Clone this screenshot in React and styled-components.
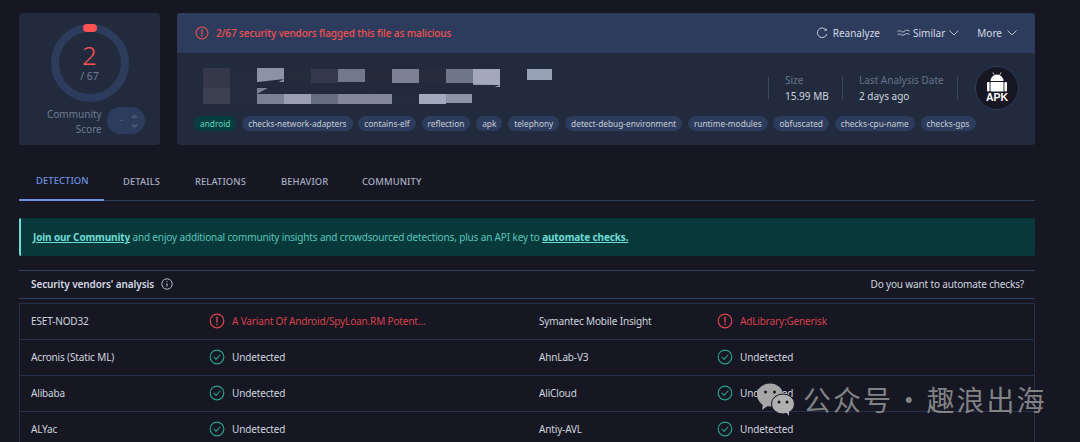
import React from "react";
import styled, { createGlobalStyle } from "styled-components";

const GlobalStyle = createGlobalStyle`
  html, body { margin: 0; padding: 0; background: #161723; }
  body { font-family: "Noto Sans", "Noto Sans CJK SC", sans-serif; }
`;

const Page = styled.div`
  position: relative;
  width: 1080px;
  height: 442px;
  box-sizing: border-box;
  padding: 13px 45px 0 19px;
  overflow: hidden;
  background: #161723;
  color: #d4d9e3;
`;

const Top = styled.div`
  display: flex;
  gap: 17px;
  height: 132px;
`;

const ScoreCard = styled.div`
  width: 141px;
  flex: none;
  box-sizing: border-box;
  padding-top: 10px;
  background: #212b3d;
  border-radius: 3px;
  display: flex;
  flex-direction: column;
  align-items: center;
`;

const Donut = styled.div`
  position: relative;
  width: 80px;
  height: 80px;
`;

const DonutText = styled.div`
  position: absolute;
  inset: 0;
  display: flex;
  flex-direction: column;
  align-items: center;
  padding-top: 19px;
  box-sizing: border-box;
`;

const ScoreValue = styled.div`
  font-size: 26px;
  line-height: 26px;
  font-weight: 300;
  color: #ff5252;
`;

const ScoreTotal = styled.div`
  font-size: 10.5px;
  line-height: 14px;
  margin-top: 1px;
  color: #6e7b93;
`;

const CommunityRow = styled.div`
  display: flex;
  align-items: center;
  gap: 5px;
  margin-top: 2px;
  align-self: flex-start;
  margin-left: 28px;
`;

const CommunityLabel = styled.div`
  font-size: 10px;
  line-height: 14.5px;
  padding-top: 2px;
  text-align: right;
  color: #6e7b93;
`;

const VotePill = styled.div`
  width: 38px;
  height: 27px;
  border-radius: 14px;
  background: #2d3c5c;
  display: flex;
  align-items: center;
  justify-content: space-between;
  padding: 0 4px 0 14px;
  box-sizing: border-box;
`;

const VoteDot = styled.span`
  width: 1.5px;
  height: 1.5px;
  background: #6e7b93;
`;

const MainCard = styled.div`
  flex: 1;
  background: #212b3d;
  border-radius: 3px;
  overflow: hidden;
  display: flex;
  flex-direction: column;
`;

const AlertBar = styled.div`
  height: 40px;
  flex: none;
  background: #2d3c5c;
  display: flex;
  align-items: center;
  padding: 0 17px 0 18px;
`;

const AlertText = styled.div`
  display: flex;
  align-items: center;
  gap: 7px;
  font-size: 10px;
  font-weight: 500;
  letter-spacing: -0.1px;
  color: #f25050;
  flex: 1;
`;

const Actions = styled.div`
  display: flex;
  align-items: center;
  gap: 17px;
`;

const Action = styled.div`
  display: flex;
  align-items: center;
  gap: ${(p) => p.$gap}px;
  font-size: 10px;
  color: #d4d9e3;
`;

const FileRow = styled.div`
  flex: none;
  height: 63px;
  display: flex;
  align-items: center;
  padding: 7px 16px 0 8px;
  box-sizing: border-box;
`;

const Mosaic = styled.svg`
  width: 400px;
  height: 50px;
  flex: none;
  align-self: flex-start;
  margin-left: -5px;
`;

const Stats = styled.div`
  margin-left: auto;
  display: flex;
  align-items: center;
`;

const Stat = styled.div`
  width: ${(p) => p.$w}px;
  height: 22px;
  box-sizing: border-box;
  border-left: 1px solid #3a475f;
  padding-left: 16px;
  display: flex;
  flex-direction: column;
  justify-content: center;
`;

const StatLabel = styled.div`
  font-size: 10px;
  line-height: 16px;
  color: #66738b;
`;

const StatValue = styled.div`
  font-size: 10px;
  line-height: 16px;
  color: #cfd5df;
`;

const Divider = styled.div`
  width: 1px;
  height: 22px;
  background: #3a475f;
  margin-right: 17px;
`;

const ApkBadge = styled.svg`
  width: 44px;
  height: 44px;
  flex: none;
`;

const Tags = styled.div`
  display: flex;
  gap: 5.8px;
  padding-left: 17px;
`;

const Tag = styled.div`
  height: 15px;
  line-height: 15px;
  padding: 0 6px;
  font-size: 8.3px;
  border-radius: 8px;
  background: ${(p) => (p.$green ? "#063f3e" : "#2d3c5c")};
  color: ${(p) => (p.$green ? "#5fcfc0" : "#c6ccd8")};
`;

const TabBar = styled.div`
  display: flex;
  height: 41px;
  box-sizing: border-box;
  margin-top: 15px;
  border-bottom: 1px solid #2f3e60;
`;

const Tab = styled.div`
  width: ${(p) => p.$w}px;
  flex: none;
  box-sizing: border-box;
  height: 41px;
  display: flex;
  align-items: center;
  padding-left: ${(p) => p.$pl}px;
  padding-top: 2px;
  font-size: 9.4px;
  font-weight: 500;
  letter-spacing: 0.1px;
  color: ${(p) => (p.$active ? "#6c93e0" : "#a6afc2")};
  border-bottom: ${(p) => (p.$active ? "2px solid #6c93e0" : "none")};
`;

const Banner = styled.div`
  height: 38px;
  line-height: 38px;
  margin-top: 17px;
  box-sizing: border-box;
  background: #07393b;
  border-left: 2px solid #6fdcd4;
  border-radius: 2px;
  padding-left: 12px;
  font-size: 10px;
  letter-spacing: -0.15px;
  color: #5cc4bb;
  white-space: pre;
`;

const BannerLink = styled.span`
  font-weight: 700;
  color: #6fdcd4;
  text-decoration: underline;
`;

const SectionHead = styled.div`
  height: 29px;
  margin-top: 14px;
  box-sizing: border-box;
  border-top: 1px solid #2f3e60;
  border-bottom: 1px solid #2f3e60;
  display: flex;
  align-items: center;
  padding: 0 11px 1px 12px;
`;

const SectionTitle = styled.div`
  display: flex;
  align-items: center;
  gap: 7px;
  font-size: 10px;
  font-weight: 600;
  letter-spacing: -0.1px;
  color: #d4d9e3;
  flex: 1;
`;

const SectionLink = styled.div`
  font-size: 10px;
  letter-spacing: -0.15px;
  color: #cfd5df;
`;

const VendorTable = styled.div`
  margin-top: 4px;
  border: 1px solid #25304a;
  border-bottom: none;
`;

const Row = styled.div`
  height: 36px;
  box-sizing: border-box;
  border-bottom: 1px solid #25304a;
  display: grid;
  grid-template-columns: 178px 330px 178px 1fr;
  align-items: center;
  padding: 0 0 2px 11px;
  font-size: 10px;
  letter-spacing: -0.15px;
`;

const Vendor = styled.div`
  color: #cfd5df;
`;

const Verdict = styled.div`
  display: flex;
  align-items: center;
  gap: 7px;
  color: ${(p) => (p.$bad ? "#d9414a" : "#cfd5df")};
`;

const Watermark = styled.div`
  position: absolute;
  left: 755px;
  top: 382px;
  display: flex;
  align-items: center;
  gap: 8px;
  font-family: "Noto Sans CJK SC", sans-serif;
  font-size: 28px;
  line-height: 34px;
  letter-spacing: 2px;
  word-spacing: -6.5px;
  color: rgba(160, 160, 160, 0.78);
  white-space: nowrap;
`;

const AlertIcon = ({ color = "#f25050", size = 16 }) => (
  <svg width={size} height={size} viewBox="0 0 16 16" fill="none" style={{ flex: "none" }}>
    <circle cx="8" cy="8" r="6.8" stroke={color} strokeWidth="1.2" />
    <path d="M8 4.2v5" stroke={color} strokeWidth="1.4" strokeLinecap="round" />
    <circle cx="8" cy="11.5" r="0.85" fill={color} />
  </svg>
);

const CheckIcon = () => (
  <svg width="16" height="16" viewBox="0 0 16 16" fill="none" style={{ flex: "none" }}>
    <circle cx="8" cy="8" r="6.8" stroke="#26a08c" strokeWidth="1.2" />
    <path d="M5 8.2l2.1 2.1L11 6" stroke="#26a08c" strokeWidth="1.1" strokeLinecap="round" strokeLinejoin="round" />
  </svg>
);

const Chevron = () => (
  <svg width="12" height="8" viewBox="0 0 12 8" fill="none">
    <path d="M1.5 1.5L6 6l4.5-4.5" stroke="#c6ccd8" strokeWidth="0.9" />
  </svg>
);

const mosaicCells = [
  [23, 8, 27, 35, "#343848"], [50, 8, 27, 35, "#232b3c"], [77, 8, 27, 14, "#8d93a6"], [104, 8, 27, 10, "#262b3c"],
  [131, 9, 27, 14, "#343a4b"], [158, 9, 27, 13, "#72798b"], [185, 9, 27, 14, "#252a3b"], [212, 9, 27, 14, "#7c8293"],
  [239, 9, 27, 14, "#272c3d"], [266, 9, 27, 14, "#70778a"], [293, 9, 27, 18, "#a3a8bc"], [320, 9, 27, 14, "#232a3b"],
  [347, 9, 25, 11, "#98a2b6"],
  [23, 28, 27, 16, "#3c4152"], [50, 30, 27, 14, "#232b3c"], [77, 28, 27, 16, "#7a8193"], [104, 34, 27, 10, "#9a9fb3"],
  [131, 34, 27, 10, "#686e81"], [158, 34, 54, 10, "#82889a"], [212, 34, 27, 10, "#232b3c"], [239, 34, 27, 10, "#a0a9bd"],
  [266, 34, 26, 9, "#8d94a8"],
];

const tags = [
  "android", "checks-network-adapters", "contains-elf", "reflection", "apk", "telephony",
  "detect-debug-environment", "runtime-modules", "obfuscated", "checks-cpu-name", "checks-gps",
];

const rows = [
  ["ESET-NOD32", "A Variant Of Android/SpyLoan.RM Potent…", true, "Symantec Mobile Insight", "AdLibrary:Generisk", true],
  ["Acronis (Static ML)", "Undetected", false, "AhnLab-V3", "Undetected", false],
  ["Alibaba", "Undetected", false, "AliCloud", "Undetected", false],
  ["ALYac", "Undetected", false, "Antiy-AVL", "Undetected", false],
];

const tabs = [
  ["DETECTION", 85, 17, true],
  ["DETAILS", 75, 19],
  ["RELATIONS", 86, 16],
  ["BEHAVIOR", 81, 16],
  ["COMMUNITY", 100, 16],
];

export default function App() {
  return (
    <Page>
      <GlobalStyle />
      <Top>
        <ScoreCard>
          <Donut>
            <svg width="80" height="80" viewBox="0 0 80 80" fill="none">
              <circle cx="40" cy="40" r="35" stroke="#2d3c5c" strokeWidth="8" />
              <rect x="33" y="1" width="14" height="8" rx="4" fill="#ff5252" />
            </svg>
            <DonutText>
              <ScoreValue>2</ScoreValue>
              <ScoreTotal>/ 67</ScoreTotal>
            </DonutText>
          </Donut>
          <CommunityRow>
            <CommunityLabel>
              Community
              <br />
              Score
            </CommunityLabel>
            <VotePill>
              <VoteDot />
              <svg width="12" height="20" viewBox="0 0 12 20">
                <path d="M1.5 7l4-4 4 4z" fill="#46546f" />
                <path d="M1.5 13.5h8l-4 4z" fill="#46546f" />
              </svg>
            </VotePill>
          </CommunityRow>
        </ScoreCard>
        <MainCard>
          <AlertBar>
            <AlertText>
              <AlertIcon size={14} />
              2/67 security vendors flagged this file as malicious
            </AlertText>
            <Actions>
              <Action $gap={5}>
                <svg width="12" height="12" viewBox="0 0 12 12" fill="none">
                  <path d="M10.2 3.2A4.8 4.8 0 1 0 10.8 7" stroke="#c6ccd8" strokeWidth="1" />
                  <path d="M10.6 1v2.8H7.8" fill="#c6ccd8" />
                </svg>
                Reanalyze
              </Action>
              <Action $gap={3}>
                <svg width="13" height="10" viewBox="0 0 13 10" fill="none">
                  <path d="M0.5 3.5C3 1 4.5 5.5 7 3.5S10 2 12.5 3M0.5 6.8C3 4.5 4.5 8.5 7 6.8S10 5.5 12.5 6.5" stroke="#c6ccd8" strokeWidth="0.9" />
                </svg>
                Similar
                <Chevron />
              </Action>
              <Action $gap={4}>
                More
                <Chevron />
              </Action>
            </Actions>
          </AlertBar>
          <FileRow>
            <Mosaic viewBox="0 0 400 50">
              {mosaicCells.map(([x, y, w, h, fill], i) => (
                <rect key={i} x={x} y={y} width={w} height={h} fill={fill} />
              ))}
              <path d="M104 19L60 24h60l70 0 130 1-16 6-90-1-100 4H77z" fill="#212b3d" />
            </Mosaic>
            <Stats>
              <Stat $w={74}>
                <StatLabel>Size</StatLabel>
                <StatValue>15.99 MB</StatValue>
              </Stat>
              <Stat $w={115}>
                <StatLabel>Last Analysis Date</StatLabel>
                <StatValue>2 days ago</StatValue>
              </Stat>
              <Divider />
              <ApkBadge viewBox="0 0 44 44">
                <circle cx="22" cy="22" r="21.5" fill="#161723" stroke="#2d3c5c" />
                <path d="M15.5 15a6.5 6.5 0 0 1 13 0z" fill="#fff" />
                <path d="M18 6.5l1.2 2.2M26 6.5L24.8 8.7" stroke="#fff" strokeWidth="0.8" />
                <rect x="15.5" y="16" width="13" height="9.5" fill="#fff" />
                <rect x="12" y="16" width="2.6" height="9.5" rx="1" fill="#fff" />
                <rect x="29.4" y="16" width="2.6" height="9.5" rx="1" fill="#fff" />
                <text x="22" y="34.5" textAnchor="middle" fontSize="10.5" fontWeight="700" fill="#fff" fontFamily="Liberation Sans, sans-serif">APK</text>
              </ApkBadge>
            </Stats>
          </FileRow>
          <Tags>
            {tags.map((t) => (
              <Tag key={t} $green={t === "android"}>{t}</Tag>
            ))}
          </Tags>
        </MainCard>
      </Top>
      <TabBar>
        {tabs.map(([label, w, pl, active]) => (
          <Tab key={label} $w={w} $pl={pl} $active={active}>{label}</Tab>
        ))}
      </TabBar>
      <Banner>
        <BannerLink>Join our Community</BannerLink>
        {" and enjoy additional community insights and crowdsourced detections, plus an API key to "}
        <BannerLink>automate checks.</BannerLink>
      </Banner>
      <SectionHead>
        <SectionTitle>
          Security vendors' analysis
          <svg width="12" height="12" viewBox="0 0 12 12" fill="none">
            <circle cx="6" cy="6" r="5.2" stroke="#c6ccd8" strokeWidth="0.9" />
            <path d="M6 5.2v3.2" stroke="#c6ccd8" />
            <circle cx="6" cy="3.5" r="0.6" fill="#c6ccd8" />
          </svg>
        </SectionTitle>
        <SectionLink>Do you want to automate checks?</SectionLink>
      </SectionHead>
      <VendorTable>
        {rows.map(([a, av, ab, b, bv, bb]) => (
          <Row key={a}>
            <Vendor>{a}</Vendor>
            <Verdict $bad={ab}>
              {ab ? <AlertIcon color="#e0444c" /> : <CheckIcon />}
              {av}
            </Verdict>
            <Vendor>{b}</Vendor>
            <Verdict $bad={bb}>
              {bb ? <AlertIcon color="#e0444c" /> : <CheckIcon />}
              {bv}
            </Verdict>
          </Row>
        ))}
      </VendorTable>
      <Watermark>
        <svg width="40" height="34" viewBox="0 0 40 34" style={{ flex: "none" }}>
          <ellipse cx="15" cy="13" rx="13" ry="11.5" fill="#a6a6a6" />
          <path d="M8 21l-1 7 7-5z" fill="#a6a6a6" />
          <ellipse cx="28" cy="22" rx="11.5" ry="10" fill="#b0b0b0" stroke="#161723" strokeWidth="1" />
          <path d="M31 30l3 4 0-6z" fill="#b0b0b0" />
          <circle cx="10.5" cy="10" r="1.5" fill="#161723" />
          <circle cx="19.5" cy="10" r="1.5" fill="#161723" />
          <circle cx="24" cy="20" r="1.5" fill="#161723" />
          <circle cx="32" cy="20" r="1.5" fill="#161723" />
        </svg>
        公众号 · 趣浪出海
      </Watermark>
    </Page>
  );
}
